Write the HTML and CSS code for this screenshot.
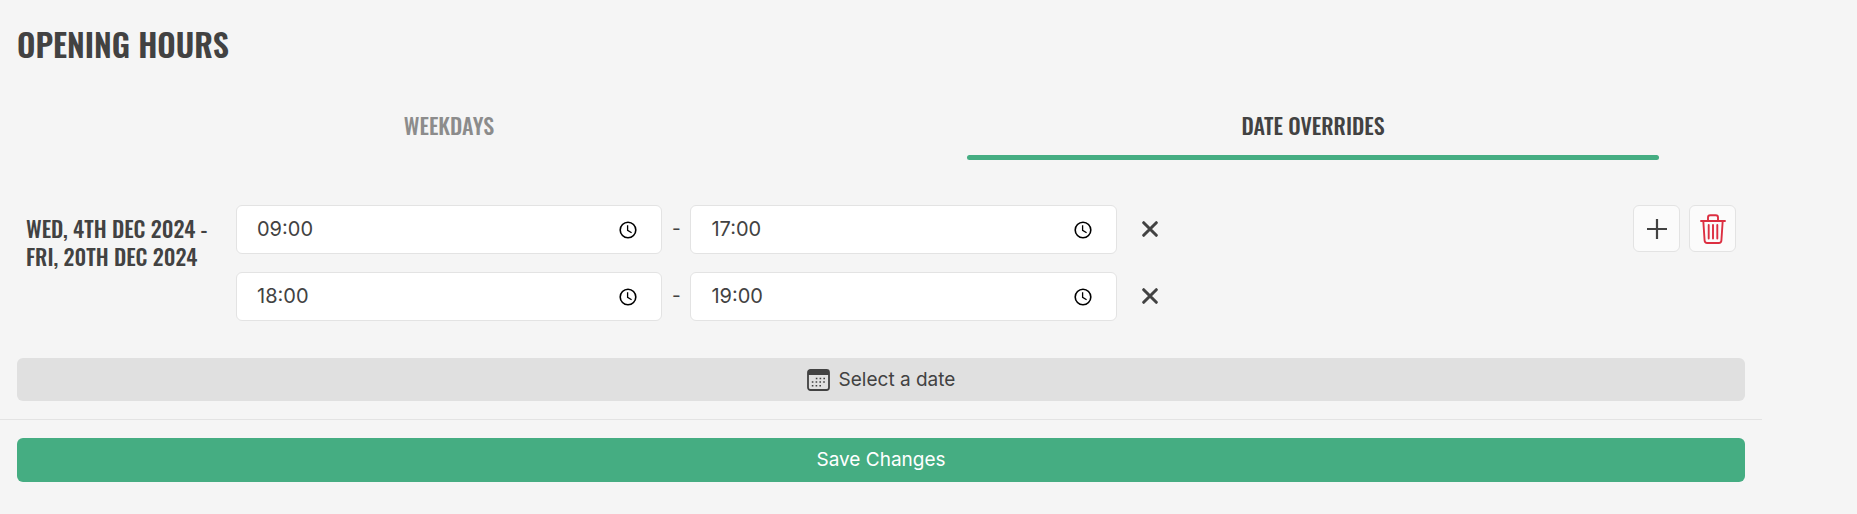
FILE: index.html
```html
<!DOCTYPE html>
<html lang="en">
<head>
<meta charset="utf-8">
<meta name="viewport" content="width=device-width, initial-scale=1">
<title>Opening Hours</title>
<link rel="stylesheet" href="styles.css">
</head>
<body>
<svg class="sprite" aria-hidden="true">
  <symbol id="clock" viewBox="0 0 18 18"><circle cx="9" cy="9" r="7.8" fill="none" stroke="currentColor" stroke-width="1.6"/><path d="M8.6 4.2V9.4L12.6 11.8" fill="none" stroke="currentColor" stroke-width="1.3"/></symbol>
  <symbol id="cross" viewBox="0 0 16 16"><path d="M1.7 1.7L14.3 14.3M14.3 1.7L1.7 14.3" fill="none" stroke="currentColor" stroke-width="3" stroke-linecap="round"/></symbol>
</svg>
<main class="page">
  <h1 class="title">Opening Hours</h1>
  <div class="tabs" role="tablist">
    <button class="tab" type="button" role="tab" aria-selected="false">Weekdays</button>
    <button class="tab tab-active" type="button" role="tab" aria-selected="true">Date Overrides</button>
  </div>
  <form class="form">
    <section class="override">
      <h2 class="dates">Wed, 4th Dec 2024 -<br>Fri, 20th Dec 2024</h2>
      <div class="slots">
        <div class="slot">
          <div class="time"><input class="time-input" type="text" value="09:00" aria-label="First opening time"><button class="clock" type="button" aria-label="Pick time"><svg class="clock-icon"><use href="#clock"/></svg></button></div>
          <span class="dash">-</span>
          <div class="time"><input class="time-input" type="text" value="17:00" aria-label="First closing time"><button class="clock" type="button" aria-label="Pick time"><svg class="clock-icon"><use href="#clock"/></svg></button></div>
          <button class="remove" type="button" aria-label="Remove hours"><svg class="cross-icon"><use href="#cross"/></svg></button>
        </div>
        <div class="slot">
          <div class="time"><input class="time-input" type="text" value="18:00" aria-label="Second opening time"><button class="clock" type="button" aria-label="Pick time"><svg class="clock-icon"><use href="#clock"/></svg></button></div>
          <span class="dash">-</span>
          <div class="time"><input class="time-input" type="text" value="19:00" aria-label="Second closing time"><button class="clock" type="button" aria-label="Pick time"><svg class="clock-icon"><use href="#clock"/></svg></button></div>
          <button class="remove" type="button" aria-label="Remove hours"><svg class="cross-icon"><use href="#cross"/></svg></button>
        </div>
      </div>
      <div class="actions">
        <button class="square" type="button" aria-label="Add hours"><svg width="20" height="20" viewBox="0 0 20 20"><path d="M10 0V20M0 10H20" stroke="currentColor" stroke-width="2.2"/></svg></button>
        <button class="square square-danger" type="button" aria-label="Delete override"><svg width="26" height="30" viewBox="0 0 26 30" fill="none" stroke="currentColor" stroke-width="1.9" stroke-linecap="round" stroke-linejoin="round"><path d="M1 7H25M3.3 7L4.6 26.5Q4.8 29 7.2 29H18.8Q21.2 29 21.4 26.5L22.7 7M8 7V3.5Q8 1.2 10.3 1.2H15.7Q18 1.2 18 3.5V7M8.7 11V24.5M13 11V24.5M17.3 11V24.5"/></svg></button>
      </div>
    </section>
    <button class="wide wide-muted" type="button">
      <svg width="23" height="22" viewBox="0 0 23 22"><rect x="1" y="1" width="21" height="20" rx="2.5" fill="none" stroke="currentColor" stroke-width="1.8"/><path d="M1 2.5Q1 1 3 1H20Q22 1 22 2.5V6H1Z" fill="currentColor"/><path d="M8.8 9.5H18.5M4.8 13H18.5M4.8 16.8H15" stroke="currentColor" stroke-width="1.6" stroke-dasharray="1.6 2.2"/></svg>
      Select a date
    </button>
    <div class="footer"><button class="wide wide-primary" type="submit">Save Changes</button></div>
  </form>
</main>
</body>
</html>
```
FILE: styles.css
```css
* { box-sizing: border-box; }

body {
  margin: 0;
  background: #f5f5f5;
  color: #424242;
  font-family: Inter, "Liberation Sans", sans-serif;
  font-size: 19px;
}

button, input { font: inherit; color: inherit; }
button { padding: 0; border: 0; background: none; cursor: pointer; }
svg { display: block; flex: none; }
.sprite { position: absolute; width: 0; height: 0; }

.page { margin-right: 95px; padding-top: 23px; }

.title, .tab, .dates {
  margin: 0;
  font-family: Oswald, "Roboto Condensed", "Liberation Sans Narrow", "Liberation Sans", sans-serif;
  font-weight: 500;
  text-transform: uppercase;
}
.title { padding: 0 17px; font-size: 32px; line-height: 42px; font-weight: 600; }

.tabs { display: grid; grid-template-columns: 1fr 1fr; margin: 42px 17px 0; }
.tab {
  display: flex;
  flex-direction: column;
  align-items: center;
  gap: 13px;
  padding-top: 1px;
  font-size: 22px;
  line-height: 34px;
  color: #8c8c8c;
}
.tab::after { content: ""; width: 80%; height: 5px; border-radius: 3px; }
.tab-active { color: #424242; }
.tab-active::after { background: #45ad82; }

.override {
  display: grid;
  grid-template-columns: 210px minmax(0, 1fr) auto;
  padding: 45px 26px 37px;
}
.dates { padding-top: 9px; font-size: 22px; line-height: 28px; white-space: nowrap; }
.slots { display: grid; gap: 18px; }
.slot {
  display: grid;
  grid-template-columns: minmax(0, 19fr) 28px minmax(0, 19fr) minmax(66px, 23fr);
  align-items: center;
}
.time {
  display: flex;
  align-items: center;
  height: 49px;
  padding: 0 24px 0 20px;
  border: 1px solid #e3e3e3;
  border-radius: 6px;
  background: #fff;
}
.time-input { flex: 1; min-width: 0; padding: 0 0 1px; border: 0; outline: 0; background: none; font-size: 20px; }
.clock { color: #000; }
.clock-icon { width: 18px; height: 18px; }
.dash { padding-bottom: 2px; text-align: center; }
.remove { display: grid; place-items: center; width: 66px; height: 49px; padding-bottom: 1px; }
.cross-icon { width: 16px; height: 16px; }

.actions { display: flex; gap: 9px; }
.square {
  display: grid;
  place-items: center;
  width: 47px;
  height: 47px;
  border: 1px solid #e3e3e3;
  border-radius: 6px;
  background: #fbfbfb;
}
.square-danger { color: #dc2f41; }

.form { display: flex; flex-direction: column; }
.wide {
  display: flex;
  justify-content: center;
  align-items: center;
  gap: 9px;
  min-height: 43px;
  border-radius: 6px;
}
.wide-muted { margin: 0 17px 18px; background: #e0e0e0; }
.footer { display: grid; padding: 18px 17px 32px; border-top: 1px solid #e3e3e3; }
.wide-primary { min-height: 44px; padding-bottom: 2px; background: #45ad82; color: #fff; }
```
